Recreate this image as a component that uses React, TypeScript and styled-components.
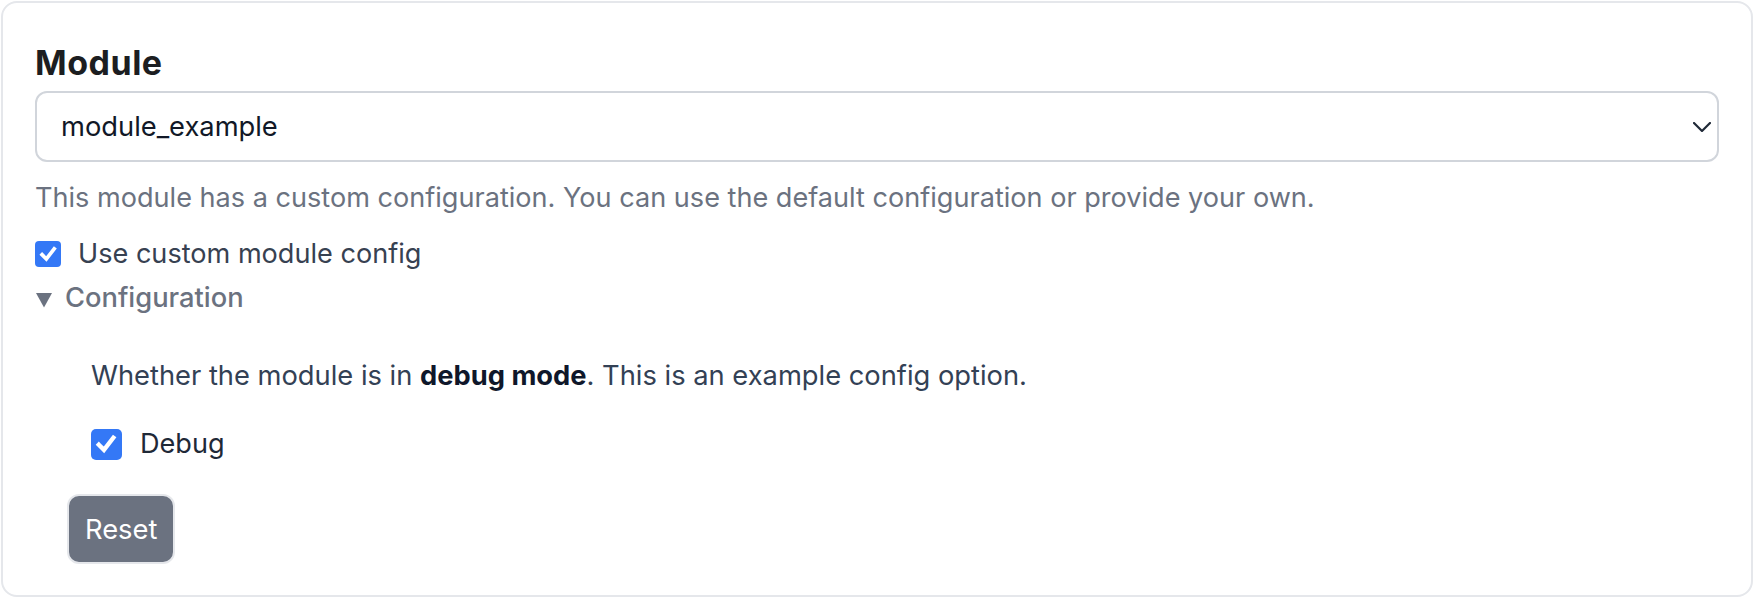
import React from "react";
import styled, { createGlobalStyle } from "styled-components";

const GlobalStyle = createGlobalStyle`
  html, body {
    margin: 0;
    padding: 0;
    background: #ffffff;
  }
  body {
    font-family: Inter, "Noto Sans", "Liberation Sans", sans-serif;
    -webkit-font-smoothing: antialiased;
  }
  * { box-sizing: border-box; }
`;

const Card = styled.section`
  margin: 1px;
  border: 2px solid #e5e7eb;
  border-radius: 16px;
  padding: 40px 32px 30px 32px;
  min-height: 596px;
  display: flex;
  flex-direction: column;
`;

const Heading = styled.h2`
  margin: 0 0 8px 0;
  font-size: 34px;
  line-height: 40px;
  font-weight: 700;
  color: #1c1e21;
  letter-spacing: 0.5px;
`;

const SelectWrap = styled.div`
  position: relative;
  width: 100%;
`;

const Select = styled.select`
  appearance: none;
  -webkit-appearance: none;
  width: 100%;
  height: 71px;
  border: 2px solid #d1d5db;
  border-radius: 12px;
  background: #ffffff;
  padding: 0 60px 0 24px;
  font-family: inherit;
  font-size: 27.3px;
  color: #111827;
  outline: none;
`;

const Chevron = styled.svg`
  position: absolute;
  right: 8px;
  top: 50%;
  transform: translateY(-50%);
  width: 18px;
  height: 10px;
  pointer-events: none;
`;

const Help = styled.p`
  margin: 16px 0 0 0;
  font-size: 27.1px;
  line-height: 40px;
  color: #6b7280;
`;

const CheckRow = styled.label<{ $gap: number; $mt: number }>`
  display: flex;
  align-items: center;
  gap: ${(p) => p.$gap}px;
  margin-top: ${(p) => p.$mt}px;
  height: 40px;
  cursor: pointer;
`;

const Box = styled.span<{ $size: number }>`
  width: ${(p) => p.$size}px;
  height: ${(p) => p.$size}px;
  flex: none;
  border-radius: ${(p) => Math.round(p.$size / 6)}px;
  background: #3478f6;
  display: flex;
  align-items: center;
  justify-content: center;
`;

const CheckLabel = styled.span<{ $color: string }>`
  font-size: 27.1px;
  line-height: 40px;
  color: ${(p) => p.$color};
`;

const Details = styled.div`
  margin-top: 4px;
  display: flex;
  flex-direction: column;
`;

const Summary = styled.div`
  display: flex;
  align-items: center;
  gap: 12px;
  height: 40px;
  font-size: 27.3px;
  line-height: 40px;
  font-weight: 500;
  color: #6b7280;
`;

const Triangle = styled.svg`
  width: 18px;
  height: 16px;
  flex: none;
  margin-top: 3px;
`;

const DetailsBody = styled.div`
  padding-left: 32px;
  margin-top: 38px;
  display: flex;
  flex-direction: column;
  align-items: flex-start;
`;

const Fieldset = styled.div`
  padding-left: 24px;
  display: flex;
  flex-direction: column;
`;

const Description = styled.p`
  margin: 0;
  font-size: 27.3px;
  line-height: 40px;
  color: #334155;
  b {
    font-weight: 700;
    color: #0f172a;
  }
`;

const ResetButton = styled.button`
  margin-top: 30px;
  height: 70px;
  padding: 0 16px;
  border: 2px solid #e5e7eb;
  border-radius: 12px;
  background: #6b7280;
  color: #ffffff;
  font-family: inherit;
  font-size: 27.3px;
  font-weight: 400;
  cursor: pointer;
`;

function Check({ size }: { size: number }) {
  return (
    <Box $size={size}>
      <svg width={size * 0.78} height={size * 0.78} viewBox="0 0 16 16" fill="none">
        <path d="M3.2 8.4 L6.6 11.8 L12.8 3.8" stroke="#ffffff" strokeWidth="2.9" strokeLinecap="square" strokeLinejoin="miter" />
      </svg>
    </Box>
  );
}

export default function App() {
  return (
    <>
      <GlobalStyle />
      <Card>
        <Heading>Module</Heading>
        <SelectWrap>
          <Select defaultValue="module_example">
            <option value="module_example">module_example</option>
          </Select>
          <Chevron viewBox="0 0 18 10" fill="none">
            <path d="M1 1 L9 9 L17 1" stroke="#1f2937" strokeWidth="2.2" strokeLinecap="round" strokeLinejoin="round" />
          </Chevron>
        </SelectWrap>
        <Help>
          This module has a custom configuration. You can use the default configuration or provide your own.
        </Help>
        <CheckRow $gap={17} $mt={16}>
          <Check size={26} />
          <CheckLabel $color="#374151">Use custom module config</CheckLabel>
        </CheckRow>
        <Details>
          <Summary>
            <Triangle viewBox="0 0 18 16">
              <polygon points="1,1 17,1 9,15.5" fill="#6b7280" />
            </Triangle>
            Configuration
          </Summary>
          <DetailsBody>
            <Fieldset>
              <Description>
                Whether the module is in <b>debug mode</b>. This is an example config option.
              </Description>
              <CheckRow $gap={18} $mt={28}>
                <Check size={31} />
                <CheckLabel $color="#1f2937">Debug</CheckLabel>
              </CheckRow>
            </Fieldset>
            <ResetButton type="button">Reset</ResetButton>
          </DetailsBody>
        </Details>
      </Card>
    </>
  );
}
